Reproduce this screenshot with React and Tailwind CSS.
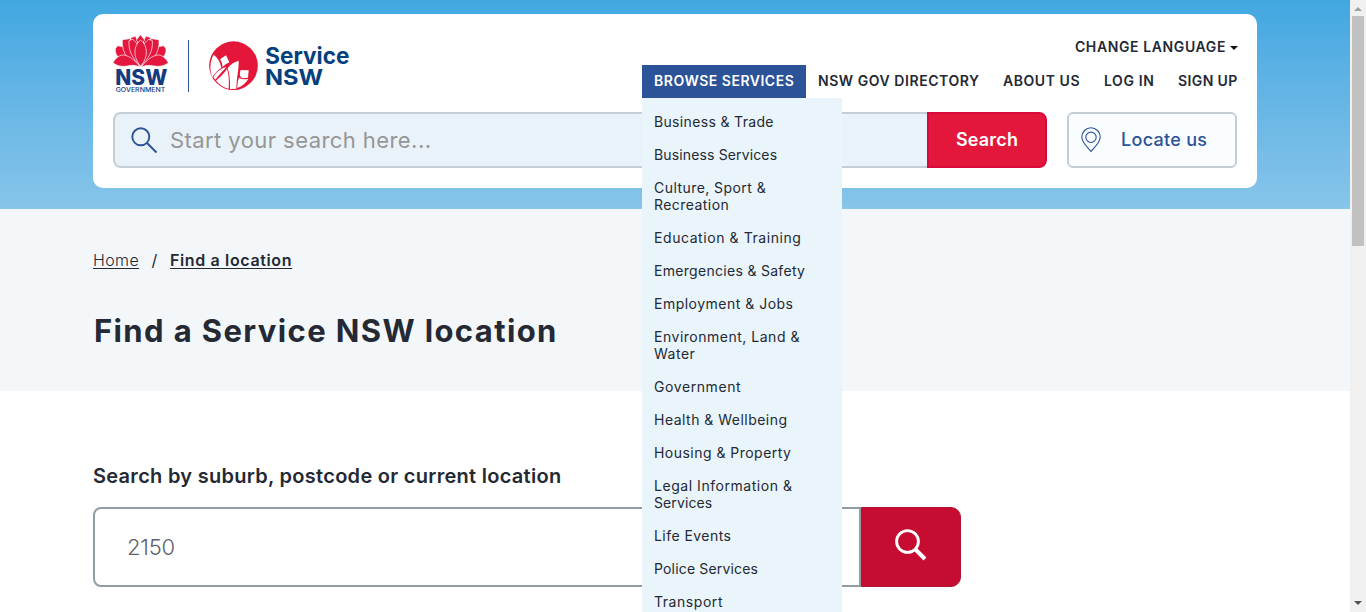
import React from "react";

const services = [
  { lines: ["Business & Trade"], tracking: "tracking-[0.34px]" },
  { lines: ["Business Services"], tracking: "tracking-[0.14px]" },
  { lines: ["Culture, Sport &", "Recreation"], tracking: "tracking-[0.44px]" },
  { lines: ["Education & Training"], tracking: "tracking-[0.57px]" },
  { lines: ["Emergencies & Safety"], tracking: "tracking-[0.3px]" },
  { lines: ["Employment & Jobs"], tracking: "tracking-[0.49px]" },
  { lines: ["Environment, Land &", "Water"], tracking: "tracking-[0.51px]" },
  { lines: ["Government"], tracking: "tracking-[0.58px]" },
  { lines: ["Health & Wellbeing"], tracking: "tracking-[0.48px]" },
  { lines: ["Housing & Property"], tracking: "tracking-[0.47px]" },
  { lines: ["Legal Information &"], tracking: "tracking-[0.54px]", tail: "Services" },
  { lines: ["Life Events"], tracking: "tracking-[0.45px]" },
  { lines: ["Police Services"], tracking: "tracking-[0.17px]" },
  { lines: ["Transport"], tracking: "tracking-[0.55px]" },
];

function Logo() {
  return (
    <svg className="block h-[68px] w-[250px]" viewBox="60 60 750 204" role="img" aria-label="NSW Government | Service NSW">
      <g fill="#e4173e" stroke="#fff" strokeWidth="2" strokeLinejoin="round">
        <path d="M121 84 L136 78 L145 96 L134 112 Z" />
        <path d="M183 84 L168 78 L159 96 L170 112 Z" />
        <path d="M139 90 L151 74 L164 90 L152 108 Z" />
        <path d="M76 116 L83 107 L99 110 C110 118 120 134 126 148 L92 146 C79 138 75 128 76 116 Z" />
        <path d="M228 116 L221 107 L205 110 C194 118 184 134 178 148 L212 146 C225 138 229 128 228 116 Z" />
        <path d="M97 89 L119 86 C136 98 146 130 150 165 C120 160 94 132 97 89 Z" />
        <path d="M207 89 L185 86 C168 98 158 130 154 165 C184 160 210 132 207 89 Z" />
        <path d="M117 92 L128 88 C144 99 150 116 152 136 L152 167 C130 150 114 122 117 92 Z" />
        <path d="M187 92 L176 88 C160 99 154 116 152 136 L152 167 C174 150 190 122 187 92 Z" />
        <path d="M152 90 C174 108 176 140 152 169 C128 140 130 108 152 90 Z" />
        <path d="M69 158 C77 143 90 134 101 135 C120 138 138 154 151 172 C136 165 124 165 112 168 C96 171 78 167 69 158 Z" />
        <path d="M235 158 C227 143 214 134 203 135 C184 138 166 154 153 172 C168 165 180 165 192 168 C208 171 226 167 235 158 Z" />
      </g>
      <g fill="#143a80" className="font-['Inter',sans-serif]">
        <text x="76" y="225" fontSize="65" fontWeight="800" textLength="156" lengthAdjust="spacingAndGlyphs">NSW</text>
        <text x="77" y="245" fontSize="18.500" fontWeight="500" textLength="149" lengthAdjust="spacingAndGlyphs">GOVERNMENT</text>
      </g>
      <rect x="294" y="90" width="3" height="156" fill="#2c5297" />
      <circle cx="430.500" cy="167" r="73" fill="#e4173a" />
      <g fill="#fff">
        <path d="M371 134 C383 143 391 156 394 173 C383 180 374 190 367 202 C359 182 359 154 371 134 Z" />
        <path d="M390 148 L408 136 L418 157 L407 163 C402 167 399 170 398 172 C397 163 395 155 390 148 Z" />
        <path d="M446 152 C447 178 440 198 439 236 L420 237 C421 208 418 190 413 175 C421 163 432 156 446 152 Z" />
        <path d="M411 177 C416 192 418 212 416 236 C402 233 389 225 378 212 C390 202 402 190 411 177 Z" />
        <path d="M409 171 C398 184 386 196 376 209 L370 202 C378 187 390 176 409 171 Z" />
        <path d="M452 180 L476 181 L474 203 L458 205 C447 201 449 190 452 180 Z" />
        <path d="M447 203 C455 208 464 209 475 207 C467 220 456 229 442 234 C442 223 443 213 447 203 Z" />
      </g>
      <g fill="#04407d" fontWeight="700" className="font-['Inter',sans-serif]">
        <text x="526" y="161" fontSize="68" textLength="252" lengthAdjust="spacingAndGlyphs">Service</text>
        <text x="525" y="224" fontSize="66" textLength="174" lengthAdjust="spacingAndGlyphs">NSW</text>
      </g>
    </svg>
  );
}

function BrowseMenu() {
  return (
    <ul className="absolute left-0 top-[33px] z-10 flex h-[700px] w-[200px] flex-col bg-[#e9f4fb] pt-[7px] text-[14px] font-normal leading-[17px] text-[#242934]">
      {services.map((s) => (
        <li key={s.lines[0]} className={`px-3 py-2 ${s.tracking}`}>
          {s.lines.map((line) => (
            <span key={line} className="block whitespace-nowrap">{line}</span>
          ))}
          {s.tail && <span className="block whitespace-nowrap tracking-[0.1px]">{s.tail}</span>}
        </li>
      ))}
    </ul>
  );
}

function Header() {
  return (
    <header className="h-[209px] bg-linear-to-b from-[#41a7e1] to-[#87c5ea] px-[93px] pt-[14px]">
      <div className="h-[174px] rounded-[10px] bg-white">
        <div className="flex h-[98px] justify-between pl-[17px] pr-2">
          <div className="pt-4">
            <Logo />
          </div>
          <div className="flex flex-col items-end text-[14px] font-semibold text-[#242934]">
            <div className="flex h-[51px] items-center gap-1 pr-[11px] pt-[13px] tracking-[0.61px]">
              CHANGE LANGUAGE
              <svg className="mt-[3px] h-1 w-2" viewBox="0 0 8 4"><path d="M0 0H8L4 4Z" fill="#111" /></svg>
            </div>
            <nav className="flex h-[33px] items-start whitespace-nowrap leading-[31px]">
              <div className="relative h-[33px] w-[164px] bg-[#2c5297] px-3">
                <span className="tracking-[0.51px] text-white">BROWSE SERVICES</span>
                <BrowseMenu />
              </div>
              <a className="w-[185px] px-3 tracking-[0.55px]">NSW GOV DIRECTORY</a>
              <a className="w-[101px] px-3 tracking-[0.55px]">ABOUT US</a>
              <a className="w-[74px] px-3 tracking-[0.6px]">LOG IN</a>
              <a className="w-[83px] px-3 tracking-[0.4px]">SIGN UP</a>
            </nav>
          </div>
        </div>
        <div className="flex h-14 px-5">
          <div className="flex flex-1 items-center rounded-l-lg border-2 border-r-0 border-[#c3ced5] bg-[#e9f2f9] pl-4">
            <svg className="mt-[2px] h-7 w-7" viewBox="0 0 28 28" fill="none" stroke="#2c5297" strokeWidth="1.900">
              <circle cx="9.800" cy="9.800" r="8.500" />
              <path d="M16 16L25.500 25.500" />
            </svg>
            <span className="ml-[11px] text-[22px] tracking-[0.43px] text-[#969696]">Start your search here...</span>
          </div>
          <button className="w-[120px] rounded-r-lg border-2 border-[#d7093a] bg-[#e2173b] pb-[2px] text-[18px] font-semibold tracking-[0.18px] text-white">Search</button>
          <button className="ml-5 flex w-[170px] items-center rounded-md border-2 border-[#c3ced5] bg-[#f9fdff] pl-3 text-[#2c5297]">
            <svg className="h-[26px] w-5" viewBox="0 0 20 26" fill="none" stroke="#2c5297" strokeWidth="1.100">
              <path d="M10 24.500C7 20.500 .8 16 .8 10A9.200 9.200 0 0 1 19.200 10C19.200 16 13 20.500 10 24.500Z" />
              <circle cx="10" cy="10.300" r="5.200" />
            </svg>
            <span className="ml-5 pb-[2px] text-[18px] font-medium tracking-[0.29px]">Locate us</span>
          </button>
        </div>
      </div>
    </header>
  );
}

function Scrollbar() {
  return (
    <div className="flex h-full w-4 shrink-0 flex-col items-center bg-[#f0f0f0]">
      <svg className="h-4 w-4 shrink-0" viewBox="0 0 16 16"><path d="M4 11L8 7L12 11Z" fill="#a0a0a0" /></svg>
      <div className="h-[230px] w-3 bg-[#c1c1c1]" />
      <svg className="mt-auto h-4 w-4 shrink-0" viewBox="0 0 16 16"><path d="M4 5L8 9L12 5Z" fill="#505050" /></svg>
    </div>
  );
}

export default function App() {
  return (
    <div className="flex h-[612px] w-full overflow-hidden bg-white font-['Inter','Liberation_Sans',sans-serif] text-[#242934]">
      <div className="min-w-0 flex-1">
        <Header />
        <section className="h-[182px] bg-[#f3f7fa] px-[93px] pt-[39px]">
          <div className="flex h-6 items-center text-[16px] leading-6">
            <a className="w-[46px] whitespace-nowrap font-light tracking-[0.39px] underline decoration-1 underline-offset-2">Home</a>
            <span className="w-[31px] text-center">/</span>
            <a className="font-semibold tracking-[0.64px] underline decoration-1 underline-offset-2">Find a location</a>
          </div>
          <h1 className="ml-px mt-[39px] text-[31px] font-bold leading-10 tracking-[1.380px]">Find a Service NSW location</h1>
        </section>
        <section className="px-[93px] pt-[71px]">
          <p className="text-[20px] font-semibold leading-7 tracking-[0.28px]">Search by suburb, postcode or current location</p>
          <div className="mt-[17px] flex h-20 w-[868px]">
            <div className="flex flex-1 items-center rounded-l-lg border-2 border-[#909da3] pl-8 text-[22px] font-light tracking-[-0.2px] text-[#5f626b]">2150</div>
            <button className="flex w-[100px] items-center justify-center rounded-r-[10px] border border-[#b01433] bg-[#c60c30]">
              <svg className="-mt-1 h-8 w-8" viewBox="0 0 32 32" fill="none" stroke="#fff">
                <circle cx="12.500" cy="12.500" r="10.900" strokeWidth="2.900" />
                <path d="M20 20L30 30" strokeWidth="4" />
              </svg>
            </button>
          </div>
        </section>
      </div>
      <Scrollbar />
    </div>
  );
}
